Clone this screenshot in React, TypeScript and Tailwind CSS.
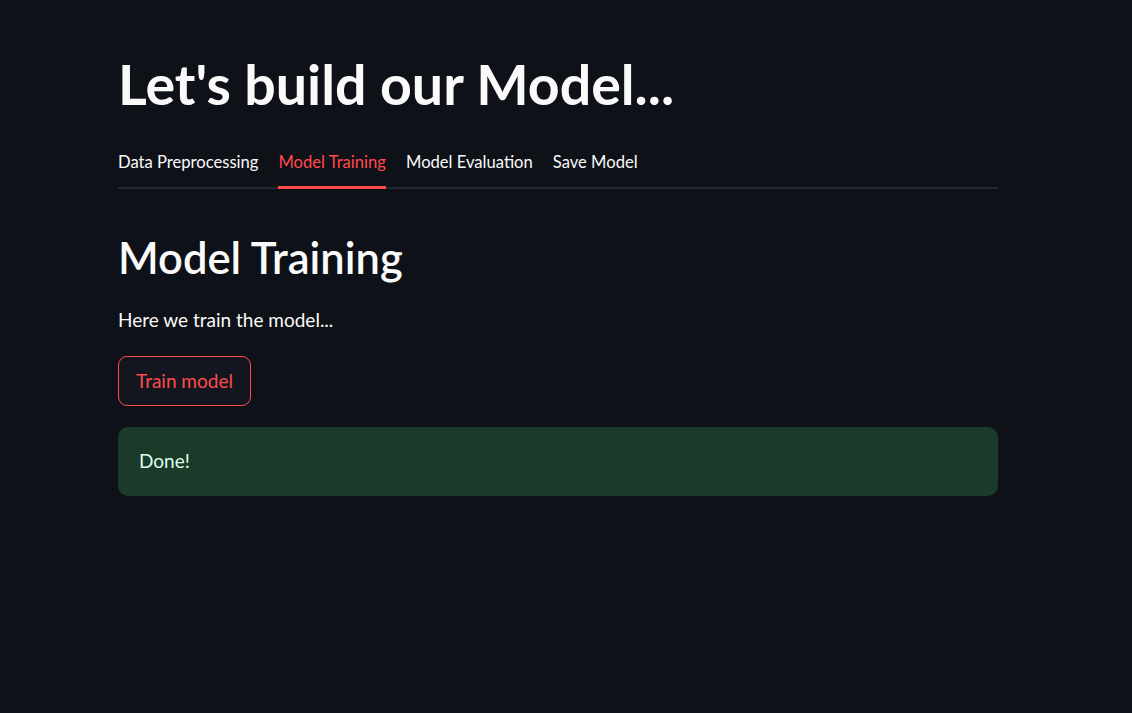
import React from "react";

export default function App() {
  const tabs = ["Data Preprocessing", "Model Training", "Model Evaluation", "Save Model"];
  return (
    <div
      className="min-h-screen w-full bg-[#0e1117] text-[#fafafa]"
      style={{ fontFamily: "Lato, 'Noto Sans', sans-serif" }}
    >
      <div className="ml-[118px] w-[880px] pt-[51px]">
        <h1 className="text-[55.5px] font-bold leading-[66px]">Let's build our Model...</h1>
        <div className="mt-[33px] flex border-b-2 border-[#262730]">
          <div className="flex gap-[20px]">
            {tabs.map((t, i) => (
              <div
                key={t}
                className={
                  "relative pb-[13px] text-[16.6px] leading-[24px] " +
                  (i === 1 ? "text-[#ff4b4b]" : "text-[#fafafa]")
                }
              >
                {t}
                {i === 1 && (
                  <div className="absolute bottom-[-2px] left-0 right-0 h-[3px] bg-[#ff4b4b]" />
                )}
              </div>
            ))}
          </div>
        </div>
        <h2 className="mt-[42px] text-[43.5px] font-semibold leading-[52px]">Model Training</h2>
        <p className="mt-[22px] text-[19px] leading-[30px]">Here we train the model...</p>
        <button className="mt-[21px] h-[50px] rounded-[9px] border border-[#ff4b4b] bg-[#13161e] px-[17px] text-[19px] text-[#ff4b4b]">
          Train model
        </button>
        <div className="mt-[21px] flex h-[69px] items-center rounded-[10px] bg-[#1a3b2a] px-[21px] text-[19px] text-[#dffde9]">
          Done!
        </div>
      </div>
    </div>
  );
}
